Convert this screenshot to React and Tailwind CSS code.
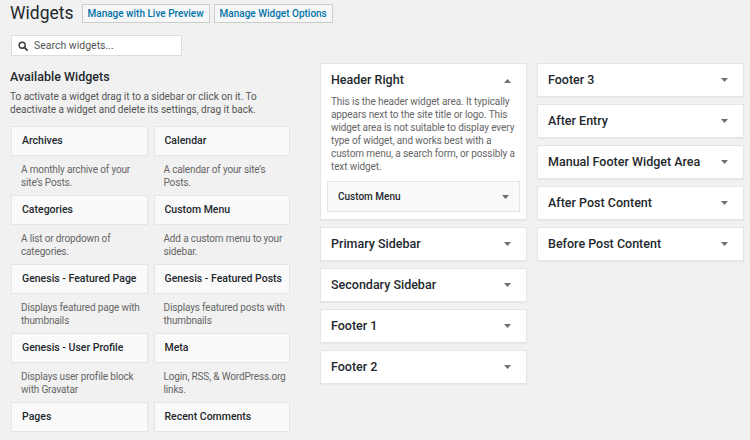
import React from "react";

const widgets = [
  ["Archives", "A monthly archive of your site’s Posts."],
  ["Calendar", "A calendar of your site’s Posts."],
  ["Categories", "A list or dropdown of categories."],
  ["Custom Menu", "Add a custom menu to your sidebar."],
  ["Genesis - Featured Page", "Displays featured page with thumbnails"],
  ["Genesis - Featured Posts", "Displays featured posts with thumbnails"],
  ["Genesis - User Profile", "Displays user profile block with Gravatar"],
  ["Meta", "Login, RSS, & WordPress.org links."],
  ["Pages", ""],
  ["Recent Comments", ""],
];

const middle = ["Primary Sidebar", "Secondary Sidebar", "Footer 1", "Footer 2"];
const right = ["Footer 3", "After Entry", "Manual Footer Widget Area", "After Post Content", "Before Post Content"];

function Arrow({ up }) {
  return (
    <svg width="7" height="4" viewBox="0 0 7 4" className="shrink-0">
      <polygon points={up ? "0,4 7,4 3.5,0" : "0,0 7,0 3.5,4"} fill="#6b7075" />
    </svg>
  );
}

function Area({ title }) {
  return (
    <div className="h-[34px] bg-white border border-[#e5e5e5] shadow-[0_1px_1px_rgba(0,0,0,0.04)] flex items-center justify-between pl-[10px] pr-[15px]">
      <span className="text-[12.5px] font-medium text-[#23282d]">{title}</span>
      <Arrow />
    </div>
  );
}

export default function App() {
  return (
    <div className="w-[750px] h-[440px] overflow-hidden bg-[#f1f1f1] px-[10px] pt-[4px] font-['Roboto',sans-serif] text-[#23282d]">
      <div className="flex items-center h-[19px]">
        <h1 className="text-[17.5px] leading-none mr-[8px]">Widgets</h1>
        <button className="h-[19px] px-[5px] border border-[#ccc] bg-[#f7f7f7] text-[10px] font-medium text-[#0073aa] mr-[4px]">
          Manage with Live Preview
        </button>
        <button className="h-[19px] px-[5px] border border-[#ccc] bg-[#f7f7f7] text-[10px] font-medium text-[#0073aa]">
          Manage Widget Options
        </button>
      </div>

      <div className="mt-[12px] ml-[1px] w-[171px] h-[21px] bg-white border border-[#ddd] flex items-center gap-[6px] px-[6px]">
        <svg width="10" height="10" viewBox="0 0 12 12">
          <circle cx="5" cy="5" r="3.6" fill="none" stroke="#32373c" strokeWidth="1.7" />
          <line x1="7.6" y1="7.6" x2="11" y2="11" stroke="#32373c" strokeWidth="1.9" strokeLinecap="round" />
        </svg>
        <span className="text-[10.5px] text-[#555]">Search widgets...</span>
      </div>

      <div className="flex mt-[7px]">
        <div className="w-[280px] shrink-0 pt-[6px]">
          <h2 className="text-[12.5px] font-medium leading-[16px]">Available Widgets</h2>
          <p className="mt-[5px] text-[10px] leading-[13px] text-[#555] pr-[30px]">
            To activate a widget drag it to a sidebar or click on it. To deactivate a widget and delete its settings, drag it back.
          </p>
          <div className="grid grid-cols-2 gap-x-[6px] mt-[10px] ml-[1px]">
            {widgets.map(([name, desc]) => (
              <div key={name} className="h-[69px]">
                <div className="h-[30px] bg-[#fafafa] border border-[#e5e5e5] flex items-center px-[10px] text-[10.5px] font-medium whitespace-nowrap">
                  {name}
                </div>
                <p className="pt-[8px] pl-[10px] pr-[4px] text-[10px] leading-[12.5px] tracking-[-0.15px] text-[#666]">{desc}</p>
              </div>
            ))}
          </div>
        </div>

        <div className="w-[207px] shrink-0 ml-[30px] flex flex-col gap-[7px]">
          <div className="bg-white border border-[#e5e5e5] shadow-[0_1px_1px_rgba(0,0,0,0.04)] px-[6px] pb-[7px]">
            <div className="h-[31px] pt-[2px] flex items-center justify-between pl-[4px] pr-[9px]">
              <span className="text-[12.5px] font-medium">Header Right</span>
              <Arrow up />
            </div>
            <p className="px-[4px] text-[10px] leading-[13px] tracking-[-0.1px] text-[#666]">
              This is the header widget area. It typically appears next to the site title or logo. This widget area is not suitable to display every type of widget, and works best with a custom menu, a search form, or possibly a text widget.
            </p>
            <div className="mt-[8px] h-[31px] bg-[#fafafa] border border-[#e5e5e5] flex items-center justify-between pl-[10px] pr-[10px]">
              <span className="text-[10px] font-medium">Custom Menu</span>
              <Arrow />
            </div>
          </div>
          {middle.map((t) => (
            <Area key={t} title={t} />
          ))}
        </div>

        <div className="w-[207px] shrink-0 ml-[10px] flex flex-col gap-[7px]">
          {right.map((t) => (
            <Area key={t} title={t} />
          ))}
        </div>
      </div>
    </div>
  );
}
